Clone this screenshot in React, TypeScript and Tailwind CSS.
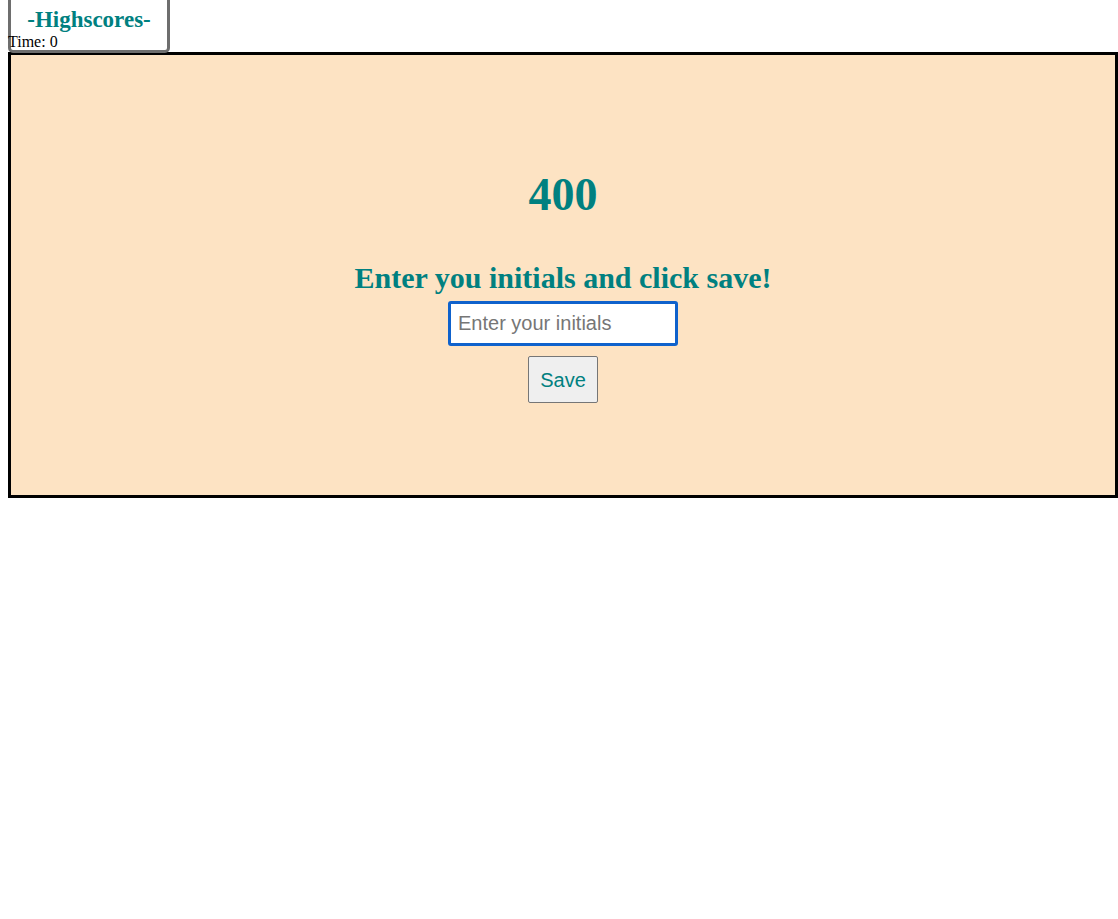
import React from 'react';

export default function App() {
  return (
    <div className="min-h-screen bg-white pl-2 font-['Liberation_Serif',serif] text-black">
      {/* Top bar: highscores button and timer */}
      <div className="flex flex-col items-start">
        <button className="-mt-[3px] h-[56px] w-[162px] rounded-b-[5px] border-[3px] border-[#6e6e6e] bg-white pb-[12px] text-[23px] font-bold leading-none text-[#008080]">
          -Highscores-
        </button>
        <p className="-mt-[20px] h-[18px] text-[16px] leading-[18px]">Time: 0</p>
      </div>

      {/* Score card */}
      <div className="mt-px flex w-[1110px] flex-col items-center border-[3px] border-black bg-[#fde3c3] pb-[92px]">
        <h1 className="mt-[117px] text-[46px] font-bold leading-none text-[#008080]">400</h1>
        <h2 className="mt-[45px] text-[30px] font-bold leading-none text-[#008080]">
          Enter you initials and click save!
        </h2>
        <input
          autoFocus
          placeholder="Enter your initials"
          className="mt-[8px] h-[45px] w-[230px] rounded-[3px] border-[3px] border-[#0f62cc] bg-white px-[7px] font-['Liberation_Sans',sans-serif] text-[20px] text-black outline-none placeholder:text-[#767676]"
        />
        <button className="mt-[10px] h-[47px] w-[70px] rounded-[2px] border border-[#767676] bg-[#efefef] font-['Liberation_Sans',sans-serif] text-[20px] text-[#008080]">
          Save
        </button>
      </div>
    </div>
  );
}
